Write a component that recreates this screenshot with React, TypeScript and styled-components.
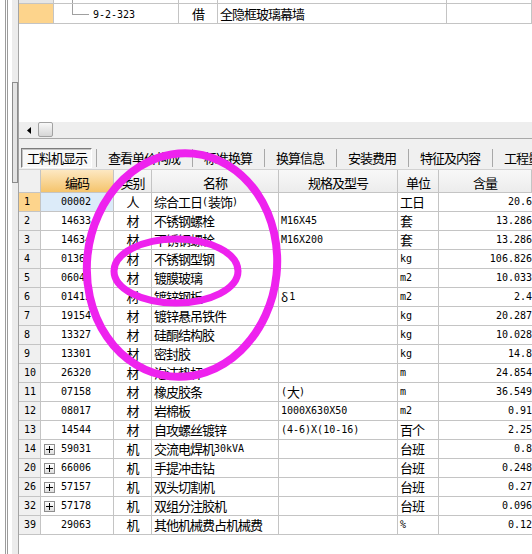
import React from 'react';
import styled, { createGlobalStyle } from 'styled-components';

const CJK = '"Noto Sans CJK SC", "Noto Sans", sans-serif';
const MONO = '"DejaVu Sans Mono", "Liberation Mono", monospace';
const GRID = '#c4c4c4';

const GlobalStyle = createGlobalStyle`
  html, body {
    margin: 0;
    padding: 0;
    background: #fff;
  }
  body {
    font-family: ${CJK};
    font-size: 13px;
    color: #000;
  }
`;

interface MaterialRow {
  no: string;
  code: string;
  kind: string;
  name: string;
  spec: string;
  unit: string;
  qty: string;
  expand?: boolean;
  active?: boolean;
}

const rows: MaterialRow[] = [
  { no: '1', code: '00002', kind: '人', name: '综合工日(装饰)', spec: '', unit: '工日', qty: '20.6', active: true },
  { no: '2', code: '14633', kind: '材', name: '不锈钢螺栓', spec: 'M16X45', unit: '套', qty: '13.286' },
  { no: '3', code: '14634', kind: '材', name: '不锈钢螺栓', spec: 'M16X200', unit: '套', qty: '13.286' },
  { no: '4', code: '01367', kind: '材', name: '不锈钢型钢', spec: '', unit: 'kg', qty: '106.826' },
  { no: '5', code: '06043', kind: '材', name: '镀膜玻璃', spec: '', unit: 'm2', qty: '10.033' },
  { no: '6', code: '01413', kind: '材', name: '镀锌钢板', spec: 'δ1', unit: 'm2', qty: '2.4' },
  { no: '7', code: '19154', kind: '材', name: '镀锌悬吊铁件', spec: '', unit: 'kg', qty: '20.287' },
  { no: '8', code: '13327', kind: '材', name: '硅酮结构胶', spec: '', unit: 'kg', qty: '10.028' },
  { no: '9', code: '13301', kind: '材', name: '密封胶', spec: '', unit: 'kg', qty: '14.8' },
  { no: '10', code: '26320', kind: '材', name: '泡沫垫杆', spec: '', unit: 'm', qty: '24.854' },
  { no: '11', code: '07158', kind: '材', name: '橡皮胶条', spec: '(大)', unit: 'm', qty: '36.549' },
  { no: '12', code: '08017', kind: '材', name: '岩棉板', spec: '1000X630X50', unit: 'm2', qty: '0.91' },
  { no: '13', code: '14544', kind: '材', name: '自攻螺丝镀锌', spec: '(4-6)X(10-16)', unit: '百个', qty: '2.25' },
  { no: '14', code: '59031', kind: '机', name: '交流电焊机30kVA', spec: '', unit: '台班', qty: '0.8', expand: true },
  { no: '20', code: '66006', kind: '机', name: '手提冲击钻', spec: '', unit: '台班', qty: '0.248', expand: true },
  { no: '26', code: '57157', kind: '机', name: '双头切割机', spec: '', unit: '台班', qty: '0.27', expand: true },
  { no: '32', code: '57178', kind: '机', name: '双组分注胶机', spec: '', unit: '台班', qty: '0.096', expand: true },
  { no: '39', code: '29063', kind: '机', name: '其他机械费占机械费', spec: '', unit: '%', qty: '0.12' },
];

const tabs = ['查看单价构成', '标准换算', '换算信息', '安装费用', '特征及内容', '工程量明细'];

const Page = styled.div`
  position: relative;
  display: flex;
  width: 532px;
  height: 554px;
  overflow: hidden;
  background: #fff;
`;

const Rail = styled.div`
  flex: 0 0 19px;
  background: linear-gradient(
    to right,
    #fff 0 5px,
    #9c9c9c 5px 6px,
    #fff 6px 7px,
    #9c9c9c 7px 8px,
    #fff 8px 12px,
    #ececec 12px 18px,
    #a4a4a4 18px 19px
  );
`;

const Splitter = styled.div`
  margin: 82px 0 0 12px;
  width: 4px;
  height: 99px;
  border: 1px solid #8c8c8c;
  background: #e4e4e4;
`;

const Panel = styled.div`
  flex: 1;
  min-width: 0;
  display: flex;
  flex-direction: column;
`;

/* upper pane: the quota tree */
const TopPane = styled.div`
  height: 139px;
  box-sizing: border-box;
  display: flex;
  flex-direction: column;
  border-bottom: 1px solid #a8a8a8;
`;

const TopRow = styled.div<{ $h: number }>`
  display: grid;
  grid-template-columns: 35px 125px 39px 229px 1fr;
  height: ${p => p.$h}px;
  flex: 0 0 auto;
`;

const TopCell = styled.div<{ $head?: string; $align?: string }>`
  box-sizing: border-box;
  display: flex;
  align-items: center;
  justify-content: ${p => p.$align || 'flex-start'};
  padding-left: ${p => (p.$align ? 0 : 2)}px;
  border-right: 1px solid ${GRID};
  border-bottom: 1px solid ${GRID};
  background: ${p => p.$head || 'transparent'};
  line-height: 18px;
  white-space: nowrap;
  overflow: hidden;
`;

const TreeCell = styled(TopCell)`
  align-items: flex-start;
  padding-left: 18px;
`;

const TreeStub = styled.div`
  width: 1px;
  height: 100%;
  background: #a0a0a0;
`;

const TreeLabel = styled.div`
  margin-left: 4px;
  align-self: center;
`;

const Blank = styled.div`
  flex: 1;
`;

const HScroll = styled.div`
  display: flex;
  height: 16px;
  background: #eeeeee;
`;

const ArrowButton = styled.div`
  width: 19px;
  display: flex;
  align-items: center;
  justify-content: center;
`;

const Thumb = styled.div`
  width: 15px;
  height: 15px;
  box-sizing: border-box;
  border: 1px solid #a2a2a2;
  border-radius: 2px;
  background: linear-gradient(#f8f8f8, #d6d6d6);
`;

/* tab strip */
const TabStrip = styled.div`
  display: flex;
  align-items: flex-start;
  height: 31px;
  box-sizing: border-box;
  padding: 9px 0 0 2px;
  background: #f0f0f0;
  border-bottom: 1px solid #d2d2d2;
  white-space: nowrap;
  overflow: hidden;
`;

const Tab = styled.div<{ $current?: boolean }>`
  flex: 0 0 auto;
  box-sizing: border-box;
  height: 20px;
  line-height: 18px;
  letter-spacing: -1px;
  padding: ${p => (p.$current ? '0 4px 0 5px' : '0 11px 0 10px')};
  border: ${p => (p.$current ? '1px solid' : '1px solid transparent')};
  border-color: ${p => (p.$current ? '#7c7c7c #ffffff #ffffff #7c7c7c' : 'transparent')};
  box-shadow: ${p => (p.$current ? 'inset 1px 1px 0 #c4c4c4' : 'none')};
  background: ${p => (p.$current ? '#f8f8f8' : 'transparent')};
`;

const TabDivider = styled.div<{ $first?: boolean }>`
  flex: 0 0 1px;
  height: 18px;
  margin: 1px 0 0 ${p => (p.$first ? 4 : 0)}px;
  background: #a8a8a8;
`;

/* lower pane: labour / material / machine table */
const Table = styled.div`
  display: grid;
  grid-template-columns: 22px 73px 38px 127px 119px 41px 1fr;
  grid-template-rows: 23px;
  grid-auto-rows: 19px;
`;

const HeadCell = styled.div<{ $sorted?: boolean; $corner?: boolean }>`
  box-sizing: border-box;
  display: flex;
  align-items: center;
  justify-content: center;
  padding-top: 2px;
  letter-spacing: -1px;
  border-right: 1px solid ${GRID};
  border-bottom: 1px solid ${GRID};
  background: ${p =>
    p.$sorted
      ? 'linear-gradient(#fde8c2, #f5c46c)'
      : p.$corner
      ? '#f0f0f0'
      : 'linear-gradient(#f8f8f8, #ececec)'};
  white-space: nowrap;
  overflow: hidden;
`;

type Tone = 'plain' | 'rowhead' | 'rowheadActive' | 'selected';

const toneColor: Record<Tone, string> = {
  plain: '#ffffff',
  rowhead: '#f0f0f0',
  rowheadActive: '#fdd48c',
  selected: '#dcebf9',
};

const Cell = styled.div<{ $align?: 'left' | 'center' | 'right'; $tone?: Tone; $last?: boolean; $pad?: number }>`
  box-sizing: border-box;
  display: flex;
  align-items: center;
  justify-content: ${p => (p.$align === 'center' ? 'center' : p.$align === 'right' ? 'flex-end' : 'flex-start')};
  padding-left: ${p => p.$pad ?? 2}px;
  line-height: 18px;
  border-right: ${p => (p.$last ? 'none' : `1px solid ${GRID}`)};
  border-bottom: 1px solid ${GRID};
  background: ${p => toneColor[p.$tone || 'plain']};
  white-space: nowrap;
  overflow: hidden;
`;

const ExpandBox = styled.div<{ $hidden?: boolean }>`
  flex: 0 0 11px;
  height: 11px;
  box-sizing: border-box;
  margin-right: 6px;
  display: flex;
  align-items: center;
  justify-content: center;
  border: 1px solid ${p => (p.$hidden ? 'transparent' : '#8e8e8e')};
  background: ${p => (p.$hidden ? 'transparent' : 'linear-gradient(#ffffff, #dedede)')};
`;

const Han = styled.span`
  font-family: ${CJK};
  font-size: 13px;
  letter-spacing: -1px;
`;

const Latin = styled.span`
  font-family: ${MONO};
  font-size: 10px;
`;

const Greek = styled.span`
  font-family: ${CJK};
  font-size: 12px;
  margin-right: 1px;
`;

const Marks = styled.svg`
  position: absolute;
  left: 0;
  top: 0;
  pointer-events: none;
`;

const WIDE = /[\u3000-\u9fff\uff00-\uffef]/;
const GREEK = /[\u0370-\u03ff]/;

const Mixed: React.FC<{ text: string }> = ({ text }) => {
  const parts = text.split(/([\u3000-\u9fff\uff00-\uffef]+|[\u0370-\u03ff]+)/).filter(Boolean);
  return (
    <>
      {parts.map((part, i) =>
        WIDE.test(part) ? (
          <Han key={i}>{part}</Han>
        ) : GREEK.test(part) ? (
          <Greek key={i}>{part}</Greek>
        ) : (
          <Latin key={i}>{part}</Latin>
        )
      )}
    </>
  );
};

const PlusIcon = () => (
  <svg width="7" height="7" viewBox="0 0 7 7">
    <rect x="0" y="3" width="7" height="1" fill="#000" />
    <rect x="3" y="0" width="1" height="7" fill="#000" />
  </svg>
);

const LeftArrow = () => (
  <svg width="4" height="7" viewBox="0 0 4 7">
    <polygon points="4,0 0,3.5 4,7" fill="#000" />
  </svg>
);

const TreeElbow = () => (
  <svg width="17" height="11" viewBox="0 0 17 11">
    <rect x="0" y="0" width="1" height="11" fill="#a0a0a0" />
    <rect x="0" y="10" width="17" height="1" fill="#a0a0a0" />
  </svg>
);

const QuotaPane = () => (
  <TopPane>
    <TopRow $h={4}>
      <TopCell $head="#e6e6e6" />
      <TreeCell>
        <TreeStub />
      </TreeCell>
      <TopCell />
      <TopCell />
      <TopCell />
    </TopRow>
    <TopRow $h={20}>
      <TopCell $head="#fdd48c" />
      <TreeCell>
        <TreeElbow />
        <TreeLabel>
          <Latin>9-2-323</Latin>
        </TreeLabel>
      </TreeCell>
      <TopCell $align="center">
        <Han>借</Han>
      </TopCell>
      <TopCell>
        <Han>全隐框玻璃幕墙</Han>
      </TopCell>
      <TopCell />
    </TopRow>
    <Blank />
    <HScroll>
      <ArrowButton>
        <LeftArrow />
      </ArrowButton>
      <Thumb />
    </HScroll>
  </TopPane>
);

const Tabs = () => (
  <TabStrip>
    <Tab $current>工料机显示</Tab>
    {tabs.map((t, i) => (
      <React.Fragment key={t}>
        <TabDivider $first={i === 0} />
        <Tab>{t}</Tab>
      </React.Fragment>
    ))}
  </TabStrip>
);

const MaterialTable = () => (
  <Table>
    <HeadCell $corner />
    <HeadCell $sorted>编码</HeadCell>
    <HeadCell>类别</HeadCell>
    <HeadCell>名称</HeadCell>
    <HeadCell>规格及型号</HeadCell>
    <HeadCell>单位</HeadCell>
    <HeadCell>含量</HeadCell>
    {rows.map(r => (
      <React.Fragment key={r.no}>
        <Cell $tone={r.active ? 'rowheadActive' : 'rowhead'} $pad={5}>
          <Latin>{r.no}</Latin>
        </Cell>
        <Cell $tone={r.active ? 'selected' : 'plain'} $pad={3}>
          <ExpandBox $hidden={!r.expand}>{r.expand && <PlusIcon />}</ExpandBox>
          <Latin>{r.code}</Latin>
        </Cell>
        <Cell $align="center" $pad={0}>
          <Han>{r.kind}</Han>
        </Cell>
        <Cell>
          <Mixed text={r.name} />
        </Cell>
        <Cell>
          <Mixed text={r.spec} />
        </Cell>
        <Cell>
          <Mixed text={r.unit} />
        </Cell>
        <Cell $align="right" $pad={0} $last>
          <Latin>{r.qty}</Latin>
        </Cell>
      </React.Fragment>
    ))}
  </Table>
);

export default function App() {
  return (
    <>
      <GlobalStyle />
      <Page>
        <Rail>
          <Splitter />
        </Rail>
        <Panel>
          <QuotaPane />
          <Tabs />
          <MaterialTable />
        </Panel>
        <Marks width="532" height="554" viewBox="0 0 532 554">
          <ellipse cx="182" cy="265" rx="95" ry="112" transform="rotate(6 182 265)" fill="none" stroke="#ee22ee" strokeWidth="8" />
          <ellipse cx="176" cy="271" rx="62" ry="32" fill="none" stroke="#ee22ee" strokeWidth="7" />
        </Marks>
      </Page>
    </>
  );
}
